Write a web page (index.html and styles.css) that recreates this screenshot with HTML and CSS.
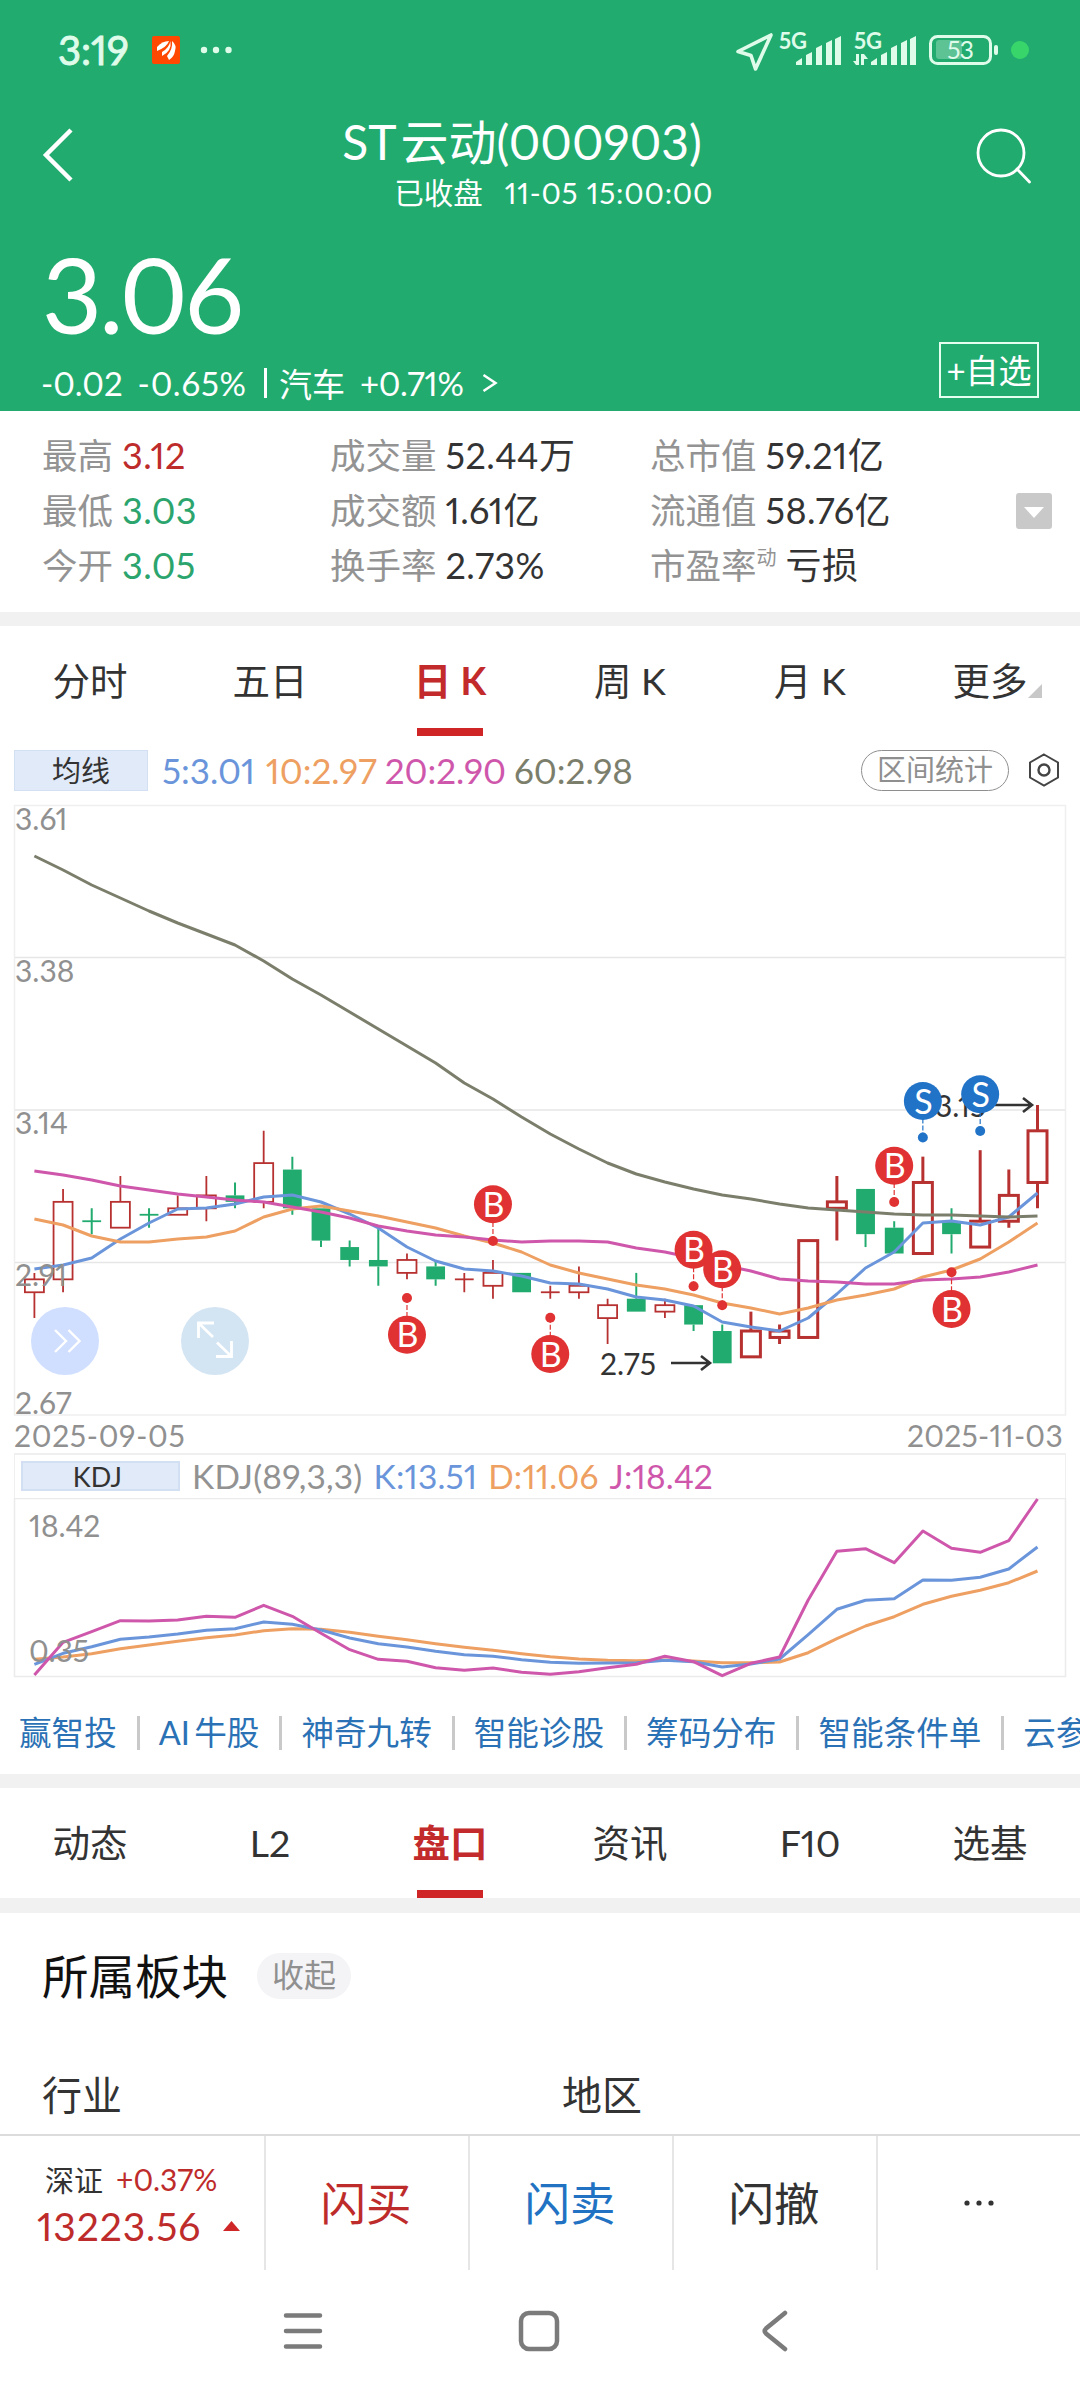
FILE: index.html
```html
<!DOCTYPE html>
<html lang="zh-CN">
<head>
    <meta charset="UTF-8">
    <meta name="viewport" content="width=device-width, initial-scale=1.0">
    <title>ST云动(000903)</title>
    <link rel="stylesheet" href="styles.css">
</head>
<body>
    <header>
        <div class="status">
            <span class="time">3:19</span>
            <svg class="app-icon" width="28" height="28" viewBox="0 0 28 28">
                <rect width="28" height="28" rx="2" fill="#ff4800"/>
                <path d="M5 15V11Q10 5 17 5Q15 11 5 15Z" fill="#fff"/>
                <path d="M10 20V16Q17 12 18.500 5Q20 15 10 20Z" fill="#fff"/>
                <path d="M17 24L15 20Q21 13 20 5Q25 9 23 15Q22 21 17 24Z" fill="#fff"/>
            </svg>
            <svg class="more-dots" width="34" height="8" viewBox="0 0 34 8" fill="#dffbea">
                <circle cx="4" cy="4" r="3.200"/><circle cx="16" cy="4" r="3.200"/><circle cx="28.500" cy="4" r="3.200"/>
            </svg>
            <svg class="signals" width="300" height="50" viewBox="0 0 300 50">
                <path d="M5 18.500L38 2L22.500 36L18 22.500Z" transform="translate(-1 5)" fill="none" stroke="#dffbea" stroke-width="3.600" stroke-linejoin="round"/>
                <g fill="#dffbea">
                    <text x="45" y="21" class="net" textLength="28">5G</text>
                    <path d="M62 37V34L68 30V37ZM72 37V27L78 24V37ZM82 37V20L88 17V37ZM92 37V15L98 12V37ZM101 37V11L107 8V37Z"/>
                    <text x="120" y="21" class="net" textLength="28">5G</text>
                    <path d="M137 37V34L143 30V37ZM147 37V27L153 24V37ZM157 37V20L163 17V37ZM167 37V15L173 12V37ZM176 37V11L182 8V37Z"/>
                    <path d="M119 33H122V26H125V37H122ZM127 26H130L134 31H130V37H127Z"/>
                    <rect x="260" y="17" width="4" height="10" rx="2"/>
                </g>
                <rect x="196.500" y="8.500" width="60" height="27" rx="7" fill="none" stroke="#dffbea" stroke-width="3"/>
                <rect x="202" y="12" width="26" height="19" rx="3" fill="#5dc294"/>
                <text x="213" y="31" class="battery" textLength="27">53</text>
                <circle cx="286" cy="22" r="9" fill="#38d56a"/>
            </svg>
        </div>

        <div class="title-bar">
            <svg width="32" height="54" viewBox="0 0 32 54"><path d="M29 2L4 27L29 52" fill="none" stroke="#fff" stroke-width="4.500"/></svg>
            <div class="title">
                <h1>ST 云动(000903)</h1>
                <p><span>已收盘</span><span>11-05 15:00:00</span></p>
            </div>
            <svg width="56" height="56" viewBox="0 0 56 56" fill="none" stroke="#fff" stroke-width="2.800" stroke-linecap="round"><circle cx="25" cy="25" r="23"/><path d="M41 41L53.500 54"/></svg>
        </div>

        <div class="price">3.06</div>
        <div class="change">
            <span>-0.02</span><span class="pct">-0.65%</span><i></i><span>汽车</span><span class="industry">+0.71%</span>
            <svg width="16" height="20" viewBox="0 0 16 20"><path d="M1.500 2L13.500 10L1.500 18" fill="none" stroke="#fff" stroke-width="2.500"/></svg>
            <button class="add">+自选</button>
        </div>
    </header>

    <section class="quotes">
        <div><span>最高</span><b class="red">3.12</b></div>
        <div><span>成交量</span><b>52.44万</b></div>
        <div><span>总市值</span><b>59.21亿</b></div>
        <div><span>最低</span><b class="green">3.03</b></div>
        <div><span>成交额</span><b>1.61亿</b></div>
        <div><span>流通值</span><b>58.76亿</b></div>
        <div><span>今开</span><b class="green">3.05</b></div>
        <div><span>换手率</span><b>2.73%</b></div>
        <div><span>市盈率<sup>动</sup></span><b>亏损</b></div>
        <svg class="expand" width="36" height="36" viewBox="0 0 36 36"><rect width="36" height="36" rx="3" fill="#c9c9c9"/><path d="M8 14H28L18 25Z" fill="#fff"/></svg>
    </section>

    <nav class="tabs period">
        <a>分时</a>
        <a>五日</a>
        <a class="active">日 K</a>
        <a>周 K</a>
        <a>月 K</a>
        <a>更多<svg width="14" height="14" viewBox="0 0 14 14"><path d="M14 0V14H0Z" fill="#c8c8c8"/></svg></a>
    </nav>

    <div class="ma-row">
        <span class="ma-btn">均线</span>
        <span class="c5">5:3.01</span>
        <span class="c10">10:2.97</span>
        <span class="c20">20:2.90</span>
        <span class="c60">60:2.98</span>
        <span class="range">区间统计</span>
        <svg width="32" height="34" viewBox="0 0 32 34" fill="none" stroke="#444"><path d="M16 1.500L30 9.500V24.500L16 32.500L2 24.500V9.500Z" stroke-width="2"/><circle cx="16" cy="17" r="5.500" stroke-width="2.400"/></svg>
    </div>

    <svg id="kline" width="1080" height="620" viewBox="0 800 1080 620"></svg>

    <div class="dates"><span>2025-09-05</span><span class="to">2025-11-03</span></div>

    <div class="kdj-row">
        <span class="kdj-btn">KDJ</span>
        <span class="c-gray">KDJ(89,3,3)</span>
        <span class="c5">K:13.51</span>
        <span class="c10">D:11.06</span>
        <span class="c20">J:18.42</span>
    </div>
    <svg id="kdj" width="1080" height="180" viewBox="0 1498 1080 180"></svg>

    <div class="links">
        <a>赢智投</a><a>AI 牛股</a><a>神奇九转</a><a>智能诊股</a><a>筹码分布</a><a>智能条件单</a><a>云参数</a>
    </div>

    <nav class="tabs info">
        <a>动态</a>
        <a>L2</a>
        <a class="active">盘口</a>
        <a>资讯</a>
        <a>F10</a>
        <a>选基</a>
    </nav>

    <section class="sector">
        <div class="sector-head"><h2>所属板块</h2><span>收起</span></div>
        <div class="sector-cols"><span>行业</span><span>地区</span></div>
    </section>

    <footer>
        <div class="index">
            <p><span>深证</span><span class="red">+0.37%</span></p>
            <p class="red"><strong>13223.56</strong><svg width="17" height="10" viewBox="0 0 17 10"><path d="M8.500 0L17 10H0Z" fill="#cf2728"/></svg></p>
        </div>
        <a class="red">闪买</a>
        <a class="blue">闪卖</a>
        <a>闪撤</a>
        <a class="more"><svg width="32" height="8" viewBox="0 0 32 8" fill="#333"><circle cx="4" cy="4" r="2.600"/><circle cx="16" cy="4" r="2.600"/><circle cx="28" cy="4" r="2.600"/></svg></a>
    </footer>

    <div class="system-nav">
        <svg width="40" height="40" viewBox="0 0 40 40" stroke="#7b7b7b" stroke-width="4.500" stroke-linecap="round"><path d="M3 4.500H37M3 20H37M3 35.500H37"/></svg>
        <svg width="42" height="42" viewBox="0 0 42 42"><rect x="3" y="3" width="36" height="36" rx="8" fill="none" stroke="#7b7b7b" stroke-width="4.500"/></svg>
        <svg width="28" height="42" viewBox="0 0 28 42"><path d="M24 3L5 18.500Q2.500 21 5 23.500L24 39" fill="none" stroke="#7b7b7b" stroke-width="4.500" stroke-linecap="round"/></svg>
    </div>

    <script src="chart.js"></script>
</body>
</html>
```
FILE: styles.css
```css
* {
    box-sizing: border-box;
}
body {
    margin: 0;
    width: 1080px;
    height: 2400px;
    overflow: hidden;
    background-color: #ffffff;
    color: #333;
    font-family: Lato, "Noto Sans CJK SC", sans-serif;
    font-variant-numeric: proportional-nums;
}
svg {
    display: block;
    flex-shrink: 0;
}
h1, h2, p {
    margin: 0;
    font-weight: normal;
}
.red {
    color: #be2b2b !important;
}
.green {
    color: #2ba56d !important;
}
.blue {
    color: #2272c3 !important;
}
.c5 {
    color: #6a95db;
}
.c10 {
    color: #ee9f62;
}
.c20 {
    color: #cf57ab;
}
.c60 {
    color: #7c7e6c;
}
.c-gray {
    color: #929292;
}

/* header */
header {
    height: 411px;
    background-color: #22ab6f;
    color: #fff;
}
.status {
    display: flex;
    align-items: center;
    height: 100px;
    padding-left: 58px;
}
.time {
    width: 94px;
    font-size: 40px;
    color: #dffbea;
    -webkit-text-stroke: 0.9px #dffbea;
}
.more-dots {
    margin-left: 20px;
}
.signals {
    margin: 6px 0 0 500px;
}
.net {
    font-size: 22px;
    font-weight: bold;
}
.battery {
    font-size: 25px;
    fill: #dffbea;
}
.title-bar {
    display: flex;
    justify-content: space-between;
    height: 146px;
    padding: 0 48px 0 42px;
}
.title-bar > svg {
    margin-top: 28px;
}
.title {
    padding-right: 6px;
    text-align: center;
}
h1 {
    height: 72px;
    line-height: 83px;
    font-size: 48px;
    white-space: nowrap;
    word-spacing: -7px;
}
.title p {
    display: flex;
    gap: 22px;
    padding-left: 52px;
    line-height: 42px;
    font-size: 29.5px;
}
.title p span + span {
    margin-right: -20px;
    letter-spacing: 0.8px;
}
.price {
    height: 100px;
    padding-left: 42px;
    line-height: 96px;
    font-size: 104px;
    letter-spacing: -3px;
}
.change {
    display: flex;
    align-items: center;
    height: 75px;
    padding: 0 41px 2px 41px;
    font-size: 33px;
}
.change .pct {
    margin-left: 15px;
    letter-spacing: 0.8px;
}
.change i {
    width: 3px;
    height: 30px;
    margin: 0 12px 0 17px;
    background-color: #fff;
}
.change .industry {
    margin: 0 18px 0 15px;
    letter-spacing: -0.2px;
}
.add {
    width: 100px;
    height: 56px;
    margin: -26px 0 0 auto;
    padding: 0;
    border: 2px solid #e4fff0;
    background: none;
    color: #fff;
    font: 33px/48px Lato, "Noto Sans CJK SC", sans-serif;
}

/* quotes */
.quotes {
    position: relative;
    display: grid;
    grid-template-columns: 288px 320px 1fr;
    grid-auto-rows: 55px;
    height: 215px;
    padding: 17px 0 0 42px;
    border-bottom: 14px solid #f1f1f1;
    line-height: 55px;
    font-size: 35.5px;
}
.quotes div {
    display: flex;
    white-space: nowrap;
}
.quotes span {
    color: #939393;
}
.quotes b {
    margin-left: 9px;
    font-weight: normal;
    font-size: 36px;
    letter-spacing: 0.4px;
    color: #333;
}
.quotes sup {
    font-size: 20px;
    line-height: 0;
    vertical-align: 14px;
}
.expand {
    position: absolute;
    right: 28px;
    top: 82px;
}

/* tabs */
.tabs {
    display: grid;
    grid-template-columns: repeat(6, 1fr);
    height: 110px;
    line-height: 110px;
    font-size: 37.5px;
}
.tabs a {
    position: relative;
    text-align: center;
}
.tabs a.active {
    color: #c22a2b;
    font-weight: bold;
}
.tabs a.active::after {
    content: "";
    position: absolute;
    left: 57px;
    bottom: 0;
    width: 66px;
    height: 8px;
    background-color: #cf2526;
}
.tabs a svg {
    position: absolute;
    right: 38px;
    bottom: 38px;
}
.tabs.info {
    height: 139px;
    border-top: 14px solid #f1f1f1;
    border-bottom: 15px solid #f1f1f1;
}

/* chart rows */
.ma-row {
    display: flex;
    align-items: center;
    height: 64px;
    padding: 4px 20px 0 14px;
    font-size: 35px;
    line-height: 40px;
}
.ma-btn {
    width: 134px;
    height: 41px;
    margin-right: 14px;
    border: 1px solid #d3e0f4;
    background-color: #e1eaf8;
    text-align: center;
    font-size: 29px;
}
.ma-row .c10 {
    margin-left: 11px;
}
.ma-row .c20, .ma-row .c60 {
    margin-left: 8px;
}
.range {
    width: 148px;
    height: 41px;
    margin: 0 19px 0 auto;
    border: 1px solid #8f8f8f;
    border-radius: 21px;
    text-align: center;
    font-size: 29px;
    line-height: 38px;
    color: #8f8f8f;
}
.dates {
    display: flex;
    justify-content: space-between;
    height: 33px;
    padding: 0 17px 0 14px;
    line-height: 31px;
    font-size: 30px;
    letter-spacing: 0.7px;
    color: #909090;
}
.dates .to {
    letter-spacing: 0.3px;
}
.kdj-row {
    display: flex;
    align-items: center;
    height: 45px;
    margin: 0 14px;
    padding: 0 0 2px 6px;
    border: solid #efefef;
    border-width: 2px 1px 0 1px;
    font-size: 33.5px;
    line-height: 42px;
    letter-spacing: 0.2px;
}
.kdj-btn {
    width: 159px;
    height: 30px;
    margin-right: 12px;
    padding-right: 6px;
    border: 2px solid #d3e0f4;
    background-color: #e1eaf8;
    text-align: center;
    font-size: 27px;
    line-height: 27px;
}
.kdj-row .c5, .kdj-row .c10, .kdj-row .c20 {
    margin-left: 11px;
}
#kline text {
    font-size: 30px;
    fill: #909090;
}
#kline text.mark {
    font-size: 34px;
    fill: #fff;
    text-anchor: middle;
}
#kline text.tip {
    fill: #333;
}
#kdj text {
    font-size: 30px;
    fill: #909090;
}
.links {
    display: flex;
    align-items: center;
    height: 96px;
    padding: 14px 0 0 19px;
    overflow: hidden;
    white-space: nowrap;
    font-size: 32.6px;
    line-height: 34px;
    word-spacing: -4px;
    color: #2a71b5;
}
.links a + a {
    margin-left: 20px;
    padding-left: 19px;
    border-left: 3px solid #c9c9c9;
}

/* sectors */
.sector {
    height: 221px;
    padding-left: 42px;
}
.sector-head {
    display: flex;
    align-items: center;
    height: 126px;
}
h2 {
    font-size: 46.5px;
    line-height: 60px;
    color: #111;
}
.sector-head span {
    width: 94px;
    height: 46px;
    margin-left: 29px;
    border-radius: 23px;
    background-color: #f4f4f6;
    text-align: center;
    font-size: 32px;
    line-height: 43px;
    color: #909090;
}
.sector-cols {
    display: grid;
    grid-template-columns: 520px 1fr;
    padding-top: 26px;
    font-size: 40px;
    line-height: 60px;
}

/* bottom bar */
footer {
    display: grid;
    grid-template-columns: 264px repeat(4, 204px);
    height: 136px;
    border-top: 2px solid #dcdcdc;
}
footer a {
    display: flex;
    align-items: center;
    justify-content: center;
    padding: 0 2px 5px 0;
    border-left: 2px solid #e6e6e6;
    font-size: 45.5px;
}
footer .more {
    padding: 0;
}
.index {
    padding: 19px 0 0 37px;
}
.index p {
    display: flex;
    align-items: center;
    height: 47px;
    padding-left: 8px;
    font-size: 29px;
}
.index p span + span {
    margin-left: 13px;
    font-size: 30px;
}
.index p + p {
    padding-left: 0;
}
.index strong {
    width: 186px;
    font-size: 39px;
    letter-spacing: 0.9px;
    font-weight: normal;
}

.system-nav {
    display: flex;
    align-items: center;
    height: 122px;
    padding-left: 283px;
}
.system-nav svg + svg {
    margin-left: 195px;
}
.system-nav svg + svg + svg {
    margin-left: 201px;
}
```
FILE: chart.js
```js
const RED = '#b73131';
const GREEN = '#22ab6f';
const BLUE_MARK = '#2173c8';
const RED_MARK = '#e03232';
const MA5 = '#6a95db', MA10 = '#ee9f62', MA20 = '#cf57ab', MA60 = '#7c7e6c';

// open, close, high, low
const candles = [
    [2.86, 2.88, 2.89, 2.82], [2.88, 3.00, 3.02, 2.86], [2.97, 2.97, 2.99, 2.95, 1], [2.96, 3.00, 3.04, 2.96],
    [2.98, 2.98, 2.99, 2.96, 1], [2.98, 2.99, 3.01, 2.98], [2.99, 3.01, 3.04, 2.97], [3.01, 3.00, 3.03, 2.99],
    [3.00, 3.06, 3.11, 2.99], [3.05, 2.99, 3.07, 2.98], [2.99, 2.94, 2.99, 2.93], [2.93, 2.91, 2.94, 2.90],
    [2.91, 2.90, 2.96, 2.87], [2.89, 2.91, 2.92, 2.88], [2.90, 2.88, 2.91, 2.87], [2.88, 2.88, 2.89, 2.86],
    [2.87, 2.89, 2.91, 2.85], [2.89, 2.86, 2.89, 2.86], [2.86, 2.86, 2.87, 2.85], [2.86, 2.87, 2.90, 2.85],
    [2.82, 2.84, 2.85, 2.78], [2.85, 2.83, 2.89, 2.83], [2.83, 2.84, 2.85, 2.82], [2.84, 2.81, 2.84, 2.80],
    [2.80, 2.75, 2.81, 2.75], [2.76, 2.80, 2.83, 2.76], [2.79, 2.80, 2.81, 2.78], [2.79, 2.94, 2.94, 2.79],
    [2.99, 3.00, 3.04, 2.94], [3.02, 2.95, 3.02, 2.93], [2.96, 2.92, 2.97, 2.92], [2.92, 3.03, 3.07, 2.92],
    [2.97, 2.95, 2.99, 2.92], [2.93, 2.97, 3.08, 2.93], [2.97, 3.01, 3.05, 2.96], [3.03, 3.11, 3.15, 2.99]
];

const ma5 = [1269, 1265, 1258, 1239, 1223, 1209, 1208, 1204, 1197, 1195, 1202, 1214, 1228, 1247, 1261, 1269, 1271, 1276, 1283, 1284, 1289, 1297, 1300, 1306, 1322, 1327, 1331, 1318, 1294, 1268, 1252, 1223, 1221, 1225, 1217, 1193];
const ma10 = [1219, 1225, 1236, 1242, 1242, 1239, 1237, 1231, 1217, 1209, 1206, 1211, 1216, 1222, 1228, 1236, 1243, 1252, 1265, 1273, 1279, 1285, 1289, 1295, 1303, 1308, 1314, 1308, 1300, 1295, 1289, 1277, 1270, 1259, 1242, 1223];
const ma20 = [1171, 1175, 1180, 1186, 1190, 1194, 1197, 1200, 1202, 1207, 1212, 1218, 1226, 1231, 1235, 1237, 1240, 1242, 1241, 1241, 1242, 1248, 1252, 1258, 1265, 1271, 1279, 1281, 1282, 1284, 1284, 1280, 1279, 1277, 1272, 1265];
const ma60 = [856, 870, 885, 898, 911, 923, 934, 945, 961, 979, 995, 1012, 1029, 1046, 1063, 1083, 1099, 1117, 1134, 1149, 1163, 1174, 1182, 1189, 1195, 1199, 1204, 1208, 1210, 1212, 1214, 1215, 1215, 1216, 1217, 1216];

const kdjJ = [825, 727, 695, 662, 663, 660, 649, 652, 616, 649, 700, 749, 778, 784, 803, 811, 804, 817, 823, 815, 803, 793, 769, 785, 827, 790, 771, 600, 454, 446, 488, 393, 445, 457, 422, 297];
const kdjK = [793, 760, 740, 718, 711, 702, 691, 686, 666, 673, 690, 714, 731, 741, 754, 764, 769, 779, 787, 790, 789, 788, 781, 785, 801, 792, 777, 704, 628, 601, 596, 540, 541, 532, 507, 441];
const kdjD = [778, 771, 761, 746, 735, 724, 713, 705, 692, 686, 688, 697, 709, 719, 731, 742, 751, 761, 770, 777, 781, 782, 780, 783, 788, 788, 786, 758, 716, 678, 650, 613, 589, 571, 548, 513];

// candle index, letter, dot y, circle y
const marks = [
    [13, 'B', 1298, 1334.7], [16, 'B', 1241, 1204.3], [18, 'B', 1317.7, 1354], [23, 'B', 1286.3, 1249.7],
    [24, 'B', 1305.3, 1269.3], [30, 'B', 1202, 1165.7], [31, 'S', 1137.5, 1101], [33, 'S', 1131, 1094.3],
    [32, 'B', 1272.3, 1309]
];

const x = i => 34.4 + i * 28.66;
const y = p => 1363.3 - (p - 2.75) * 645.8;

function line(values, color) {
    const pts = values.map((v, i) => x(i).toFixed(1) + ',' + v.toFixed(1)).join(' ');
    return `<polyline points="${pts}" fill="none" stroke="${color}" stroke-width="3" stroke-linejoin="round"/>`;
}

function drawKline() {
    let s = '<path d="M14.500 805.500H1065.500V1415H14.500Z" fill="none" stroke="#efefef" stroke-width="1.500"/>';
    s += '<path d="M15 957.500H1065M15 1110H1065M15 1262.500H1065" stroke="#e6e6e6" stroke-width="1.300"/>';

    candles.forEach((c, i) => {
        const up = c[1] >= c[0] && !c[4];
        const color = up ? RED : GREEN;
        const w = i < 24 ? 1.8 : 3;
        const top = y(Math.max(c[0], c[1]));
        const bottom = y(Math.min(c[0], c[1]));
        const cx = x(i);
        s += `<path d="M${cx} ${y(c[2])}V${top}M${cx} ${bottom}V${y(c[3])}" stroke="${color}" stroke-width="${up ? w : 2}"/>`;
        if (c[0] === c[1]) {
            s += `<path d="M${cx - 9.4} ${top}H${cx + 9.4}" stroke="${color}" stroke-width="1.8"/>`;
        } else if (up) {
            s += `<rect x="${cx - 9.5}" y="${top}" width="19" height="${bottom - top}" fill="#fff" stroke="${color}" stroke-width="${w}"/>`;
        } else {
            s += `<rect x="${cx - 9.4}" y="${top}" width="18.8" height="${bottom - top}" fill="${color}"/>`;
        }
    });

    s += line(ma5, MA5) + line(ma10, MA10) + line(ma20, MA20) + line(ma60, MA60);

    [['3.61', 830], ['3.38', 982], ['3.14', 1134], ['2.91', 1286], ['2.67', 1413.5]].forEach(t => {
        s += `<text x="15" y="${t[1]}">${t[0]}</text>`;
    });

    s += '<text class="tip" x="935" y="1117">3.15</text><path d="M995 1105H1032M1023 1098L1032 1105L1023 1112" fill="none" stroke="#333" stroke-width="2.600"/>';
    s += '<text class="tip" x="600" y="1375">2.75</text><path d="M671 1363H710M701 1356L710 1363L701 1370" fill="none" stroke="#333" stroke-width="2.600"/>';

    marks.forEach(m => {
        const cx = x(m[0]);
        const color = m[1] === 'B' ? RED_MARK : BLUE_MARK;
        s += `<path d="M${cx} ${m[2]}V${m[3]}" stroke="${color}" stroke-width="1.2" stroke-dasharray="5 2"/>`;
        s += `<circle cx="${cx}" cy="${m[2]}" r="5" fill="${color}"/><circle cx="${cx}" cy="${m[3]}" r="19" fill="${color}"/>`;
        s += `<text class="mark" x="${cx + 0.5}" y="${m[3] + 12.5}">${m[1]}</text>`;
    });

    // floating buttons
    s += '<circle cx="65" cy="1341" r="34" fill="#d0dfff"/><path d="M55 1330L66 1341L55 1352M68.500 1330L79.500 1341L68.500 1352" fill="none" stroke="#fff" stroke-width="2.400"/>';
    s += '<circle cx="215" cy="1341" r="34" fill="#d3e4f3"/><path d="M213 1337L198.500 1323M198.500 1338V1323H214M217 1342.500L231.500 1356.500M231.500 1341V1356.500H216" fill="none" stroke="#fff" stroke-width="2.800"/>';
    document.getElementById('kline').innerHTML = s;
}

function drawKdj() {
    const toY = v => 1400 + v / 3;
    let s = '<path d="M14.500 1498.500H1065.500V1676.500H14.500Z" fill="none" stroke="#ebebeb" stroke-width="1.500"/>';
    s += line(kdjD.map(toY), MA10) + line(kdjK.map(toY), MA5) + line(kdjJ.map(toY), MA20);
    s += '<text x="29" y="1537">18.42</text><text x="29" y="1662">0.35</text>';
    document.getElementById('kdj').innerHTML = s;
}

drawKline();
drawKdj();
```
